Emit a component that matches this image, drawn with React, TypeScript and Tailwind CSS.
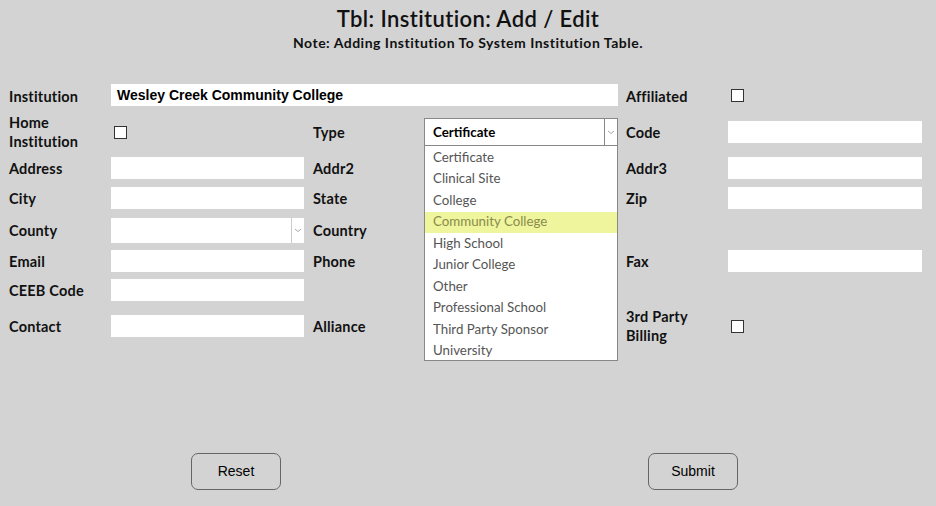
import React from "react";

const lab = "font-bold text-[14.5px] tracking-[0.2px] text-[#111] leading-[19px]";
const inp = "h-[22px] bg-white";

function Chevron() {
  return (
    <svg width="8" height="5" viewBox="0 0 8 5" className="block">
      <path d="M1 1 L4 3.5 L7 1" fill="none" stroke="#aaa" strokeWidth="1" />
    </svg>
  );
}

function Check() {
  return <div className="w-[13px] h-[13px] bg-white border border-[#333]" />;
}

const options = [
  "Certificate",
  "Clinical Site",
  "College",
  "Community College",
  "High School",
  "Junior College",
  "Other",
  "Professional School",
  "Third Party Sponsor",
  "University",
];

function Row({ h, children }: { h: number; children: React.ReactNode }) {
  return (
    <div className="flex items-center" style={{ height: h }}>
      {children}
    </div>
  );
}

export default function App() {
  return (
    <div
      className="w-[936px] h-[506px] bg-[#d3d3d3] relative overflow-hidden"
      style={{ fontFamily: "Lato, 'Noto Sans', sans-serif" }}
    >
      <div className="pt-[6px] text-center text-[#111]">
        <div className="text-[22px] font-semibold tracking-[0.4px] leading-[26px]">Tbl: Institution: Add / Edit</div>
        <div className="text-[14px] font-bold tracking-[0.5px] leading-[18px] mt-[2px]">
          Note: Adding Institution To System Institution Table.
        </div>
      </div>

      <div className="pl-[9px] mt-[26px]">
        <Row h={34}>
          <div className={`${lab} w-[102px] pt-[2px]`}>Institution</div>
          <div
            className={`${inp} w-[507px] flex items-center pl-[6px] font-bold text-black`}
            style={{ fontFamily: "'Liberation Sans', Arial, sans-serif", fontSize: 14 }}
          >
            Wesley Creek Community College
          </div>
          <div className={`${lab} w-[102px] ml-[8px] pt-[2px]`}>Affiliated</div>
          <div className="ml-[3px]">
            <Check />
          </div>
        </Row>
        <Row h={40}>
          <div className={`${lab} w-[102px]`}>
            Home
            <br />
            Institution
          </div>
          <div className="w-[192px] pl-[3px]">
            <Check />
          </div>
          <div className={`${lab} w-[111px] ml-[10px]`}>Type</div>
          <div className="w-[194px] h-[28px] bg-white border border-[#888] flex relative">
            <div className="flex-1 flex items-center pl-[8px] pt-[2px] text-[13.3px] font-bold text-black">
              Certificate
            </div>
            <div className="w-[13px] border-l border-[#888] flex items-center justify-center">
              <Chevron />
            </div>
            <div className="absolute left-[-1px] top-[26px] w-[194px] h-[216px] bg-white border border-[#888] z-10 pt-[1px]">
              {options.map((o) => (
                <div
                  key={o}
                  className={`h-[21.5px] flex items-center pl-[8px] text-[13.3px] ${
                    o === "Community College" ? "bg-[#eef59c] text-[#8a8a4c]" : "text-[#555]"
                  }`}
                >
                  {o}
                </div>
              ))}
            </div>
          </div>
          <div className={`${lab} w-[102px] ml-[8px] pt-[1px]`}>Code</div>
          <div className={`${inp} w-[194px]`} />
        </Row>
        <Row h={32}>
          <div className={`${lab} w-[102px] pt-[1px]`}>Address</div>
          <div className={`${inp} w-[193px]`} />
          <div className={`${lab} w-[111px] ml-[9px] pt-[1px]`}>Addr2</div>
          <div className="w-[194px]" />
          <div className={`${lab} w-[102px] ml-[8px] pt-[1px]`}>Addr3</div>
          <div className={`${inp} w-[194px]`} />
        </Row>
        <Row h={28}>
          <div className={`${lab} w-[102px] pt-[1px]`}>City</div>
          <div className={`${inp} w-[193px]`} />
          <div className={`${lab} w-[111px] ml-[9px] pt-[1px]`}>State</div>
          <div className="w-[194px]" />
          <div className={`${lab} w-[102px] ml-[8px] pt-[1px]`}>Zip</div>
          <div className={`${inp} w-[194px]`} />
        </Row>
        <Row h={36}>
          <div className={`${lab} w-[102px] pt-[1px]`}>County</div>
          <div className="h-[25px] w-[193px] bg-white flex">
            <div className="flex-1" />
            <div className="w-[13px] border-l border-[#ccc] flex items-center justify-center">
              <Chevron />
            </div>
          </div>
          <div className={`${lab} w-[111px] ml-[9px] pt-[1px]`}>Country</div>
        </Row>
        <Row h={26}>
          <div className={`${lab} w-[102px] pt-[1px]`}>Email</div>
          <div className={`${inp} w-[193px]`} />
          <div className={`${lab} w-[111px] ml-[9px] pt-[1px]`}>Phone</div>
          <div className="w-[194px]" />
          <div className={`${lab} w-[102px] ml-[8px] pt-[1px]`}>Fax</div>
          <div className={`${inp} w-[194px]`} />
        </Row>
        <Row h={32}>
          <div className={`${lab} w-[102px] pt-[1px]`}>CEEB Code</div>
          <div className={`${inp} w-[193px]`} />
        </Row>
        <Row h={40}>
          <div className={`${lab} w-[102px] pt-[1px]`}>Contact</div>
          <div className={`${inp} w-[193px]`} />
          <div className={`${lab} w-[111px] ml-[9px] pt-[1px]`}>Alliance</div>
          <div className="w-[194px]" />
          <div className={`${lab} w-[102px] ml-[8px]`}>
            3rd Party
            <br />
            Billing
          </div>
          <div className="ml-[3px]">
            <Check />
          </div>
        </Row>
      </div>

      <div className="flex mt-[107px]" style={{ fontFamily: "'Liberation Sans', Arial, sans-serif" }}>
        <button className="ml-[191px] w-[90px] h-[37px] border border-[#666] rounded-[7px] text-[14px] text-black bg-[#d3d3d3]">
          Reset
        </button>
        <button className="ml-[367px] w-[90px] h-[37px] border border-[#666] rounded-[7px] text-[14px] text-black bg-[#d3d3d3]">
          Submit
        </button>
      </div>
    </div>
  );
}
